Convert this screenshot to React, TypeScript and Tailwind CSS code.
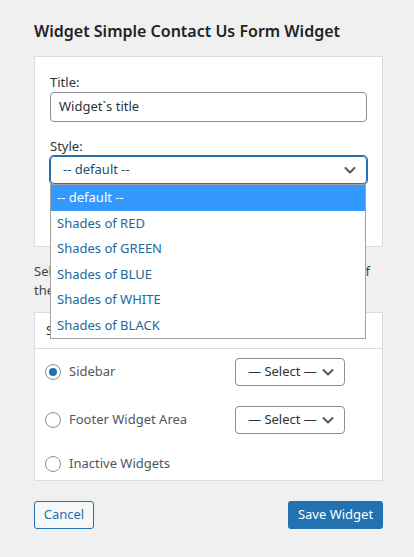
import React from 'react';

const font = { fontFamily: '"Noto Sans", "Open Sans", sans-serif' };

const Chevron = ({ className }: { className?: string }) => (
  <svg viewBox="0 0 16 16" className={className} fill="none" stroke="currentColor" strokeWidth={2} strokeLinecap="round" strokeLinejoin="round">
    <polyline points="3.5,6 8,10.5 12.5,6" />
  </svg>
);

const Radio = ({ checked }: { checked?: boolean }) => (
  <span className="flex h-4 w-4 shrink-0 items-center justify-center rounded-full border border-[#8c8f94] bg-white">
    {checked && <span className="h-2 w-2 rounded-full bg-[#2271b1]" />}
  </span>
);

const SmallSelect = () => (
  <div className="flex h-[28px] w-[110px] items-center justify-between whitespace-nowrap rounded-[4px] border border-[#8c8f94] bg-white pl-[12px] pr-[8px] text-[13px] text-[#2c3338]">
    <span>— Select —</span>
    <Chevron className="h-4 w-4 text-[#50575e]" />
  </div>
);

const options = ['-- default --', 'Shades of RED', 'Shades of GREEN', 'Shades of BLUE', 'Shades of WHITE', 'Shades of BLACK'];

export default function App() {
  return (
    <div className="h-[557px] w-full overflow-hidden bg-[#f0f0f1] pl-[34px] pr-[31px] pt-[19px]" style={font}>
      <h2 className="text-[16px] font-semibold leading-[24px] text-[#1d2327]">Widget Simple Contact Us Form Widget</h2>

      <div className="mt-[13px] h-[191px] border border-[#dcdcde] bg-white px-[15px] pt-[15px]">
        <label className="block text-[13px] leading-[20px] text-[#2c3338]">Title:</label>
        <div className="flex h-[30px] items-center rounded-[4px] border border-[#8c8f94] px-[8px] text-[13px] text-[#2c3338]">
          Widget`s title
        </div>
        <label className="mt-[14px] block text-[13px] leading-[20px] text-[#2c3338]">Style:</label>
        <div className="relative">
          <div className="flex h-[28px] items-center justify-between rounded-[4px] border border-[#2271b1] pl-[12px] pr-[8px] text-[13px] text-[#1d4f70] shadow-[0_0_0_1px_#2271b1]">
            <span>-- default --</span>
            <Chevron className="h-4 w-4 text-[#50575e]" />
          </div>
          <ul className="absolute left-0 top-full z-10 w-[316px] border border-[#a0a0a0] bg-white">
            {options.map((o, i) => (
              <li
                key={o}
                className={
                  'flex h-[25.5px] items-center pl-[6px] text-[13px] ' +
                  (i === 0 ? 'bg-[#3399ff] text-white' : 'text-[#22689a]')
                }
              >
                {o}
              </li>
            ))}
          </ul>
        </div>
      </div>

      <p className="mt-[15px] text-[13px] leading-[19px] text-[#3c434a]">
        <span className="block w-[336px] whitespace-nowrap [text-align-last:justify]">
          Select an area for this widget and where a copy of
        </span>
        <span className="block">the widget should be placed:</span>
      </p>

      <div className="mt-[12px] border border-[#dcdcde] bg-white">
        <div className="flex h-[36px] items-center border-b border-[#dcdcde] px-[11px] text-[13px] text-[#2c3338]">
          Select widget area
        </div>
        <div className="flex flex-col px-[10px] pb-[2px] pt-[9px] text-[13px] text-[#50575e]">
          <div className="flex h-[28px] items-center">
            <Radio checked />
            <span className="ml-[8px] flex-1">Sidebar</span>
            <div className="mr-[27px]"><SmallSelect /></div>
          </div>
          <div className="mt-[20px] flex h-[28px] items-center">
            <Radio />
            <span className="ml-[8px] flex-1">Footer Widget Area</span>
            <div className="mr-[27px]"><SmallSelect /></div>
          </div>
          <div className="mt-[16px] flex h-[28px] items-center">
            <Radio />
            <span className="ml-[8px] flex-1">Inactive Widgets</span>
          </div>
        </div>
      </div>

      <div className="mt-[20px] flex items-center justify-between">
        <button className="h-[28px] w-[60px] rounded-[3px] border border-[#2271b1] bg-[#f6f7f7] text-[13px] text-[#2271b1]">
          Cancel
        </button>
        <button className="h-[28px] w-[95px] rounded-[3px] bg-[#2271b1] text-[13px] text-white">
          Save Widget
        </button>
      </div>
    </div>
  );
}
